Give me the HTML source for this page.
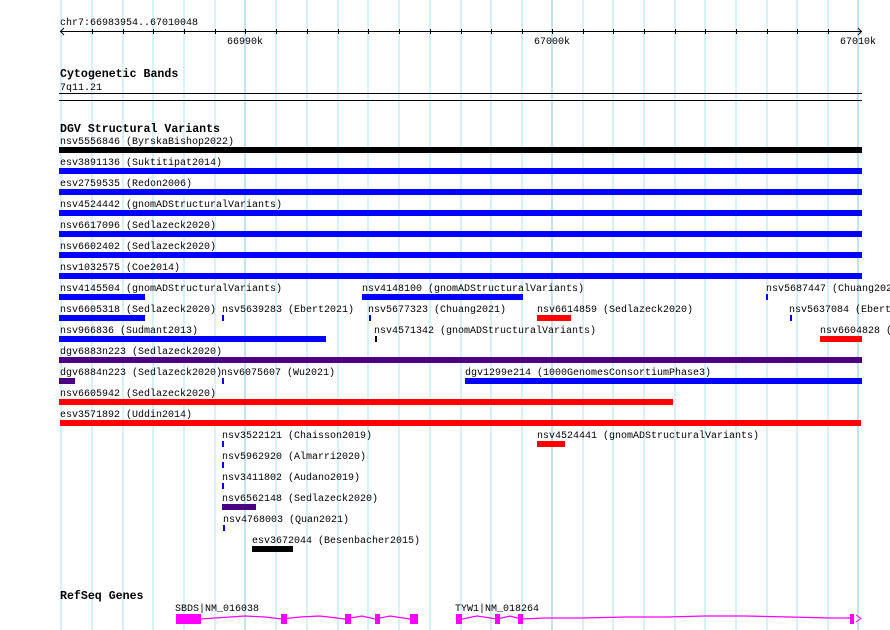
<!DOCTYPE html>
<html><head><meta charset="utf-8"><style>
html,body{margin:0;padding:0;background:#fff;width:890px;height:630px;overflow:hidden}
svg{display:block}
text{font-family:"Liberation Mono",monospace;font-size:10px;fill:#000}
.b{font-weight:bold;font-size:11.6px}
</style></head><body>
<svg width="890" height="630" viewBox="0 0 890 630" xmlns="http://www.w3.org/2000/svg">
<g stroke="#aee6ee" stroke-width="1">
<line x1="61" y1="0" x2="61" y2="630"/><line x1="92" y1="0" x2="92" y2="630"/><line x1="123" y1="0" x2="123" y2="630"/><line x1="153" y1="0" x2="153" y2="630"/><line x1="184" y1="0" x2="184" y2="630"/><line x1="215" y1="0" x2="215" y2="630"/><line x1="276" y1="0" x2="276" y2="630"/><line x1="307" y1="0" x2="307" y2="630"/><line x1="338" y1="0" x2="338" y2="630"/><line x1="368" y1="0" x2="368" y2="630"/><line x1="399" y1="0" x2="399" y2="630"/><line x1="430" y1="0" x2="430" y2="630"/><line x1="461" y1="0" x2="461" y2="630"/><line x1="491" y1="0" x2="491" y2="630"/><line x1="522" y1="0" x2="522" y2="630"/><line x1="583" y1="0" x2="583" y2="630"/><line x1="613" y1="0" x2="613" y2="630"/><line x1="644" y1="0" x2="644" y2="630"/><line x1="675" y1="0" x2="675" y2="630"/><line x1="705" y1="0" x2="705" y2="630"/><line x1="736" y1="0" x2="736" y2="630"/><line x1="767" y1="0" x2="767" y2="630"/><line x1="797" y1="0" x2="797" y2="630"/><line x1="828" y1="0" x2="828" y2="630"/>
</g>
<g stroke="#88c6e6" stroke-width="1">
<line x1="245" y1="0" x2="245" y2="630"/><line x1="552" y1="0" x2="552" y2="630"/><line x1="858" y1="0" x2="858" y2="630"/>
</g>
<!-- ruler -->
<text x="60" y="25">chr7:66983954..67010048</text>
<line x1="60" y1="31.5" x2="862" y2="31.5" stroke="#000"/>
<polyline points="64,28 60.5,31.5 64,35" fill="none" stroke="#000"/>
<polyline points="858,28 861.5,31.5 858,35" fill="none" stroke="#000"/>
<g stroke="#000">
<line x1="92.5" y1="29" x2="92.5" y2="34"/><line x1="123.5" y1="29" x2="123.5" y2="34"/><line x1="153.5" y1="29" x2="153.5" y2="34"/><line x1="184.5" y1="29" x2="184.5" y2="34"/><line x1="215.5" y1="29" x2="215.5" y2="34"/><line x1="245.5" y1="29" x2="245.5" y2="34"/><line x1="276.5" y1="29" x2="276.5" y2="34"/><line x1="307.5" y1="29" x2="307.5" y2="34"/><line x1="338.5" y1="29" x2="338.5" y2="34"/><line x1="368.5" y1="29" x2="368.5" y2="34"/><line x1="399.5" y1="29" x2="399.5" y2="34"/><line x1="430.5" y1="29" x2="430.5" y2="34"/><line x1="461.5" y1="29" x2="461.5" y2="34"/><line x1="491.5" y1="29" x2="491.5" y2="34"/><line x1="522.5" y1="29" x2="522.5" y2="34"/><line x1="552.5" y1="29" x2="552.5" y2="34"/><line x1="583.5" y1="29" x2="583.5" y2="34"/><line x1="613.5" y1="29" x2="613.5" y2="34"/><line x1="644.5" y1="29" x2="644.5" y2="34"/><line x1="675.5" y1="29" x2="675.5" y2="34"/><line x1="705.5" y1="29" x2="705.5" y2="34"/><line x1="736.5" y1="29" x2="736.5" y2="34"/><line x1="767.5" y1="29" x2="767.5" y2="34"/><line x1="797.5" y1="29" x2="797.5" y2="34"/><line x1="828.5" y1="29" x2="828.5" y2="34"/>
</g>
<text x="227" y="44">66990k</text>
<text x="534" y="44">67000k</text>
<text x="840" y="44">67010k</text>
<!-- cytobands -->
<text class="b" x="60" y="77">Cytogenetic Bands</text>
<text x="60" y="90">7q11.21</text>
<line x1="59" y1="93.5" x2="862" y2="93.5" stroke="#000"/>
<line x1="59" y1="100.5" x2="862" y2="100.5" stroke="#000"/>
<!-- DGV -->
<text class="b" x="60" y="132">DGV Structural Variants</text>
<g>
<text x="60" y="144">nsv5556846 (ByrskaBishop2022)</text><rect x="59" y="147" width="803" height="6" fill="#000"/>
<text x="60" y="165">esv3891136 (Suktitipat2014)</text><rect x="59" y="168" width="803" height="6" fill="#0000ff"/>
<text x="60" y="186">esv2759535 (Redon2006)</text><rect x="59" y="189" width="803" height="6" fill="#0000ff"/>
<text x="60" y="207">nsv4524442 (gnomADStructuralVariants)</text><rect x="59" y="210" width="803" height="6" fill="#0000ff"/>
<text x="60" y="228">nsv6617096 (Sedlazeck2020)</text><rect x="59" y="231" width="803" height="6" fill="#0000ff"/>
<text x="60" y="249">nsv6602402 (Sedlazeck2020)</text><rect x="59" y="252" width="803" height="6" fill="#0000ff"/>
<text x="60" y="270">nsv1032575 (Coe2014)</text><rect x="59" y="273" width="803" height="6" fill="#0000ff"/>

<text x="60" y="291">nsv4145504 (gnomADStructuralVariants)</text><rect x="59" y="294" width="86" height="6" fill="#0000ff"/>
<text x="362" y="291">nsv4148100 (gnomADStructuralVariants)</text><rect x="362" y="294" width="161" height="6" fill="#0000ff"/>
<text x="766" y="291">nsv5687447 (Chuang2021)</text><rect x="766" y="294" width="2" height="6" fill="#0000ff"/>

<text x="60" y="312">nsv6605318 (Sedlazeck2020)</text><rect x="59" y="315" width="86" height="6" fill="#0000ff"/>
<text x="222" y="312">nsv5639283 (Ebert2021)</text><rect x="222" y="315" width="2" height="6" fill="#0000ff"/>
<text x="368" y="312">nsv5677323 (Chuang2021)</text><rect x="369" y="315" width="2" height="6" fill="#0000ff"/>
<text x="537" y="312">nsv6614859 (Sedlazeck2020)</text><rect x="537" y="315" width="34" height="6" fill="#ff0000"/>
<text x="789" y="312">nsv5637084 (Ebert2021)</text><rect x="790" y="315" width="2" height="6" fill="#0000ff"/>

<text x="60" y="333">nsv966836 (Sudmant2013)</text><rect x="59" y="336" width="267" height="6" fill="#0000ff"/>
<text x="374" y="333">nsv4571342 (gnomADStructuralVariants)</text><rect x="375" y="336" width="2" height="6" fill="#000"/>
<text x="820" y="333">nsv6604828 (Sedlazeck2020)</text><rect x="820" y="336" width="42" height="6" fill="#ff0000"/>

<text x="60" y="354">dgv6883n223 (Sedlazeck2020)</text><rect x="59" y="357" width="803" height="6" fill="#4b0082"/>

<text x="60" y="375">dgv6884n223 (Sedlazeck2020)</text><rect x="59" y="378" width="16" height="6" fill="#4b0082"/>
<text x="221" y="375">nsv6075607 (Wu2021)</text><rect x="222" y="378" width="2" height="6" fill="#0000ff"/>
<text x="465" y="375">dgv1299e214 (1000GenomesConsortiumPhase3)</text><rect x="465" y="378" width="397" height="6" fill="#0000ff"/>

<text x="60" y="396">nsv6605942 (Sedlazeck2020)</text><rect x="59" y="399" width="614" height="6" fill="#ff0000"/>
<text x="60" y="417">esv3571892 (Uddin2014)</text><rect x="60" y="420" width="801" height="6" fill="#ff0000"/>

<text x="222" y="438">nsv3522121 (Chaisson2019)</text><rect x="222" y="441" width="2" height="6" fill="#0000ff"/>
<text x="537" y="438">nsv4524441 (gnomADStructuralVariants)</text><rect x="537" y="441" width="28" height="6" fill="#ff0000"/>
<text x="222" y="459">nsv5962920 (Almarri2020)</text><rect x="222" y="462" width="2" height="6" fill="#0000ff"/>
<text x="222" y="480">nsv3411802 (Audano2019)</text><rect x="222" y="483" width="2" height="6" fill="#0000ff"/>
<text x="222" y="501">nsv6562148 (Sedlazeck2020)</text><rect x="222" y="504" width="34" height="6" fill="#4b0082"/>
<text x="223" y="522">nsv4768003 (Quan2021)</text><rect x="223" y="525" width="2" height="6" fill="#0000ff"/>
<text x="252" y="543">esv3672044 (Besenbacher2015)</text><rect x="252" y="546" width="41" height="6" fill="#000"/>
</g>
<!-- RefSeq -->
<text class="b" x="60" y="599">RefSeq Genes</text>
<text x="175" y="611">SBDS|NM_016038</text>
<text x="455" y="611">TYW1|NM_018264</text>
<g fill="#ff00ff">
<polyline fill="none" stroke="#ff00ff" stroke-width="1.2" points="200,619 230,617 245,616 265,617 282,619 300,617 320,616 345,619 362,616 375,619 390,616 410,619"/>
<rect x="176" y="614" width="25" height="10"/>
<rect x="281" y="614" width="6" height="10"/>
<rect x="345" y="614" width="6" height="10"/>
<rect x="375" y="614" width="5" height="10"/>
<rect x="410" y="614" width="8" height="10"/>
<polyline fill="none" stroke="#ff00ff" stroke-width="1.2" points="462,619 477,616 497,619 510,616 521,619 545,618 583,618 626,617 667,617 705,616 745,616 790,617 830,618 852,618"/>
<rect x="456" y="614" width="6" height="10"/>
<rect x="495" y="614" width="5" height="10"/>
<rect x="518" y="614" width="5" height="10"/>
<rect x="850" y="614" width="4" height="10"/>
<polyline fill="none" stroke="#ff00ff" stroke-width="1" points="856,615 861,618.5 856,622"/>
</g>
</svg>
</body></html>
